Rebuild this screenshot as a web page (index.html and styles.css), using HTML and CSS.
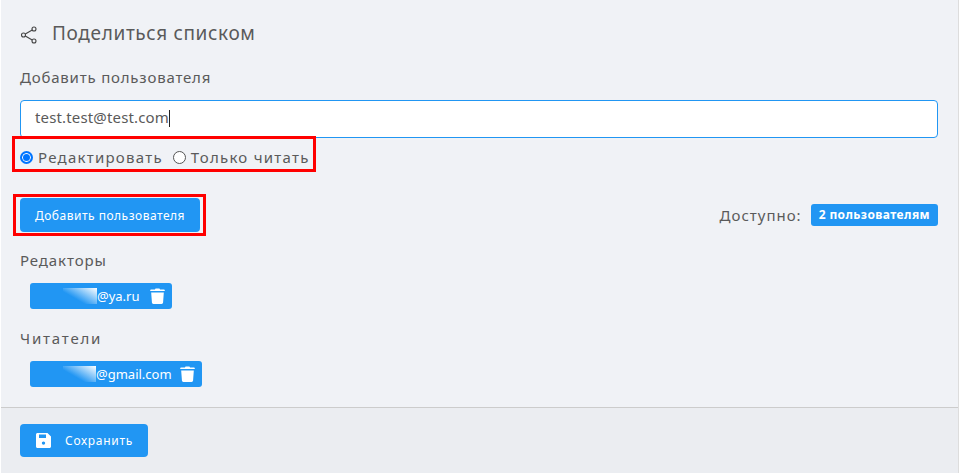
FILE: index.html
```html
<!DOCTYPE html>
<html lang="ru">

<head>
  <meta charset="UTF-8">
  <meta name="viewport" content="width=device-width, initial-scale=1.0">
  <title>Поделиться списком</title>
  <link rel="stylesheet" href="styles.css">
</head>

<body>
  <div class="panel">
    <div class="panel-body">
      <div class="title">
        <svg class="share-icon" viewBox="0 0 18 18" width="18" height="18">
          <circle cx="3.5" cy="9" r="2" />
          <circle cx="14" cy="3" r="2" />
          <circle cx="14" cy="15" r="2" />
          <path d="M5.3 8 12.2 4M5.3 10l6.9 4" />
        </svg>
        <span>Поделиться списком</span>
      </div>

      <div class="label">Добавить пользователя</div>
      <div class="input">test.test@test.com<span class="caret"></span></div>

      <div class="radios">
        <label class="radio"><span class="dot checked"></span>Редактировать</label>
        <label class="radio"><span class="dot"></span>Только читать</label>
        <div class="mark mark-radios"></div>
      </div>

      <div class="actions">
        <button class="btn btn-add">Добавить пользователя</button>
        <div class="mark mark-btn"></div>
        <div class="quota">
          <span>Доступно:</span>
          <span class="badge">2 пользователям</span>
        </div>
      </div>

      <div class="group-title">Редакторы</div>
      <div class="chip chip-editor">
        <span class="blur"></span>
        <span>@ya.ru</span>
        <svg class="trash" viewBox="0 0 14 16" width="15" height="16" preserveAspectRatio="none">
          <path d="M1 1.6h3.6L5.2.6h3.6l.6 1H13c.5 0 .8.3.8.7v.6H.2v-.6c0-.4.3-.7.8-.7zM1.1 4.6h11.8l-.7 10c0 .8-.6 1.4-1.4 1.4H3.2c-.8 0-1.4-.6-1.4-1.4z" />
        </svg>
      </div>

      <div class="group-title group-readers">Читатели</div>
      <div class="chip chip-reader">
        <span class="blur"></span>
        <span>@gmail.com</span>
        <svg class="trash" viewBox="0 0 14 16" width="15" height="16" preserveAspectRatio="none">
          <path d="M1 1.6h3.6L5.2.6h3.6l.6 1H13c.5 0 .8.3.8.7v.6H.2v-.6c0-.4.3-.7.8-.7zM1.1 4.6h11.8l-.7 10c0 .8-.6 1.4-1.4 1.4H3.2c-.8 0-1.4-.6-1.4-1.4z" />
        </svg>
      </div>
    </div>

    <div class="panel-footer">
      <button class="btn btn-save">
        <svg class="save-icon" viewBox="0 0 15 15" width="15" height="15">
          <path fill-rule="evenodd" d="M1.5 0h10L15 3.5v10c0 .8-.7 1.5-1.5 1.5h-12C.7 15 0 14.3 0 13.5v-12C0 .7.7 0 1.5 0zM3 1.5V5h7V1.5zM7.5 8.4a1.7 1.7 0 1 0 0 3.4 1.7 1.7 0 0 0 0-3.4z" />
        </svg>
        Сохранить
      </button>
    </div>
  </div>
</body>

</html>
```

FILE: styles.css
```css
* {
  box-sizing: border-box;
}

body {
  margin: 0;
  background: #fff;
  font-family: "Noto Sans", "Open Sans", sans-serif;
  color: #5a5a5a;
}

.panel {
  width: 958px;
  height: 473px;
  margin-left: 1px;
  border-right: 1px solid #ddd;
  background: #f0f2f6;
  display: flex;
  flex-direction: column;
}

.panel-body {
  height: 406px;
  flex-shrink: 0;
  padding: 0 20px 0 19px;
}

.title {
  display: flex;
  align-items: center;
  height: 24px;
  padding-top: 21px;
  box-sizing: content-box;
  font-size: 19px;
  letter-spacing: .65px;
}

.share-icon {
  margin: 4px 14px 0 0;
  fill: none;
  stroke: #444;
  stroke-width: 1.1;
}

.label {
  height: 20px;
  margin-top: 22px;
  line-height: 20px;
  font-size: 15px;
  letter-spacing: .8px;
}

.input {
  height: 38px;
  margin-top: 13px;
  padding-left: 14px;
  background: #fff;
  border: 1px solid #2196f3;
  border-radius: 4px;
  line-height: 32px;
  font-size: 15px;
  letter-spacing: .15px;
}

.caret {
  display: inline-block;
  width: 1px;
  height: 17px;
  background: #222;
  vertical-align: -4px;
}

.radios {
  position: relative;
  display: flex;
  align-items: center;
  gap: 10px;
  height: 20px;
  margin-top: 9px;
  font-size: 15px;
  letter-spacing: 1.25px;
}

.radio {
  display: flex;
  align-items: center;
}

.dot {
  width: 13px;
  height: 13px;
  margin-right: 5px;
  border: 1px solid #555;
  border-radius: 50%;
  background: #fff;
}

.dot.checked {
  border: 2px solid #0075ff;
  box-shadow: inset 0 0 0 1px #fff;
  background: #0075ff;
}

.mark {
  position: absolute;
  border: 3px solid #f00;
  pointer-events: none;
}

.mark-radios {
  left: -8px;
  top: -11px;
  width: 304px;
  height: 36px;
}

.mark-btn {
  left: -7px;
  top: -4px;
  width: 193px;
  height: 42px;
}

.actions {
  position: relative;
  display: flex;
  align-items: center;
  justify-content: space-between;
  height: 34px;
  margin-top: 31px;
}

.btn {
  display: flex;
  align-items: center;
  justify-content: center;
  border: 0;
  border-radius: 4px;
  background: #2196f3;
  color: #fff;
  font-family: inherit;
  font-size: 12px;
  letter-spacing: .5px;
}

.btn-add {
  width: 180px;
  height: 34px;
}

.quota {
  display: flex;
  align-items: center;
  gap: 9px;
  font-size: 15px;
  letter-spacing: 1px;
}

.badge {
  height: 22px;
  padding: 0 8px;
  line-height: 22px;
  border-radius: 3px;
  background: #2196f3;
  color: #fff;
  font-size: 12px;
  font-weight: 700;
  letter-spacing: .4px;
}

.group-title {
  height: 20px;
  margin-top: 18px;
  line-height: 20px;
  font-size: 15px;
  letter-spacing: .9px;
}

.group-readers {
  margin-top: 19px;
  letter-spacing: 1.8px;
}

.chip {
  display: flex;
  align-items: center;
  height: 26px;
  margin: 13px 0 0 10px;
  padding: 0 7px 0 33px;
  border-radius: 3px;
  background: #2196f3;
  color: #fff;
  font-size: 13px;
}

.chip-editor {
  width: 142px;
}

.chip-reader {
  width: 172px;
}

.chip-reader .blur {
  width: 33px;
}

.blur {
  width: 34px;
  height: 16px;
  flex-shrink: 0;
  background: linear-gradient(30deg, #2196f3 35%, #fff 100%);
}

.trash {
  margin-left: auto;
  fill: #fff;
}

.panel-footer {
  margin-top: 1px;
  flex: 1;
  padding: 16px 19px;
  border-top: 1px solid #ccc;
  background: #ebedf1;
}

.btn-save {
  width: 128px;
  height: 33px;
  gap: 14px;
  justify-content: flex-start;
  padding-left: 16px;
  letter-spacing: .7px;
}

.save-icon {
  fill: #fff;
}
```
